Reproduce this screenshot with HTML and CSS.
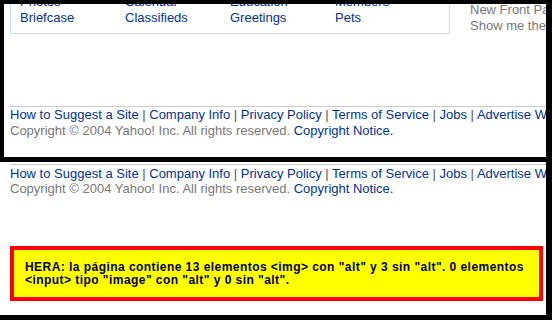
FILE: index.html
```html
<!DOCTYPE html>
<html lang="es">
<head>
    <meta charset="UTF-8">
    <title>Yahoo! - HERA</title>
    <link rel="stylesheet" href="styles.css">
</head>
<body>
    <!-- marco superior: la portada, desplazada -->
    <div class="frame frame-top">
        <div class="top-row">
            <div class="dir-box">
                <a href="#">Photos</a><a href="#">Calendar</a><a href="#">Education</a><a href="#">Members</a>
                <a href="#">Briefcase</a><a href="#">Classifieds</a><a href="#">Greetings</a><a href="#">Pets</a>
            </div>
            <div class="side-note">
                <div>New Front Page</div>
                <div>Show me the new page</div>
            </div>
        </div>

        <div class="footer">
            <div class="footer-links">
                <a href="#">How to Suggest a Site</a> | <a href="#">Company Info</a> | <a href="#">Privacy Policy</a> | <a href="#">Terms of Service</a> | <a href="#">Jobs</a> | <a href="#">Advertise With Us</a>
            </div>
            <div class="footer-copy">Copyright &copy; 2004 Yahoo! Inc. All rights reserved. <a href="#">Copyright Notice.</a></div>
        </div>
    </div>

    <!-- marco inferior: pie + informe -->
    <div class="frame frame-bottom">
        <div class="footer footer-tight">
            <div class="footer-links">
                <a href="#">How to Suggest a Site</a> | <a href="#">Company Info</a> | <a href="#">Privacy Policy</a> | <a href="#">Terms of Service</a> | <a href="#">Jobs</a> | <a href="#">Advertise With Us</a>
            </div>
            <div class="footer-copy">Copyright &copy; 2004 Yahoo! Inc. All rights reserved. <a href="#">Copyright Notice.</a></div>
        </div>

        <div class="hera-box">
            HERA: la p&aacute;gina contiene 13 elementos &lt;img&gt; con "alt" y 3 sin "alt". 0 elementos<br>
            &lt;input&gt; tipo "image" con "alt" y 0 sin "alt".
        </div>
    </div>
</body>
</html>
```

FILE: styles.css
```css
html, body {
    margin: 0;
    padding: 0;
    width: 100%;
    height: 100%;
    overflow: hidden;
}

body {
    background: #000000;
    font-family: "Liberation Sans", Arial, sans-serif;
    font-size: 13px;
    line-height: 16px;
    color: #666666;
}

a {
    color: #003399;
    text-decoration: none;
}

/* marcos */
.frame {
    background: #ffffff;
    width: 546px;
    height: 153px;
    overflow: hidden;
    white-space: nowrap;
    box-sizing: border-box;
}

.frame-top {
    height: 157px;
    border-top: 4px solid #000000;
    border-left: 4px solid #000000;
    padding-left: 6px;
}

.frame-bottom {
    margin-top: 5px;
    padding-left: 10px;
}

/* directorio */
.top-row {
    display: flex;
    align-items: flex-start;
    margin-top: -15px;
}

.dir-box {
    width: 440px;
    box-sizing: border-box;
    border: 1px solid #cddcf3;
    padding: 4px 9px 7px;
    display: grid;
    grid-template-columns: repeat(4, 105px);
}

.side-note {
    margin-left: 20px;
    margin-top: 13px;
    color: #777777;
}

/* pie */
.footer {
    margin-top: 72px;
    border-top: 1px solid #cccccc;
}

.footer-links {
    color: #555555;
}

.footer-copy {
    color: #777777;
}

.footer-tight {
    margin-top: 2px;
    padding-top: 1px;
    line-height: 15px;
}

/* informe HERA */
.hera-box {
    margin-top: 50px;
    margin-right: 3px;
    border: 4px solid #ff0000;
    background: #ffff00;
    padding: 11px 10px 10px 11px;
    color: #000000;
    font-weight: bold;
    font-size: 12px;
    line-height: 13px;
    letter-spacing: 0.45px;
}
```
